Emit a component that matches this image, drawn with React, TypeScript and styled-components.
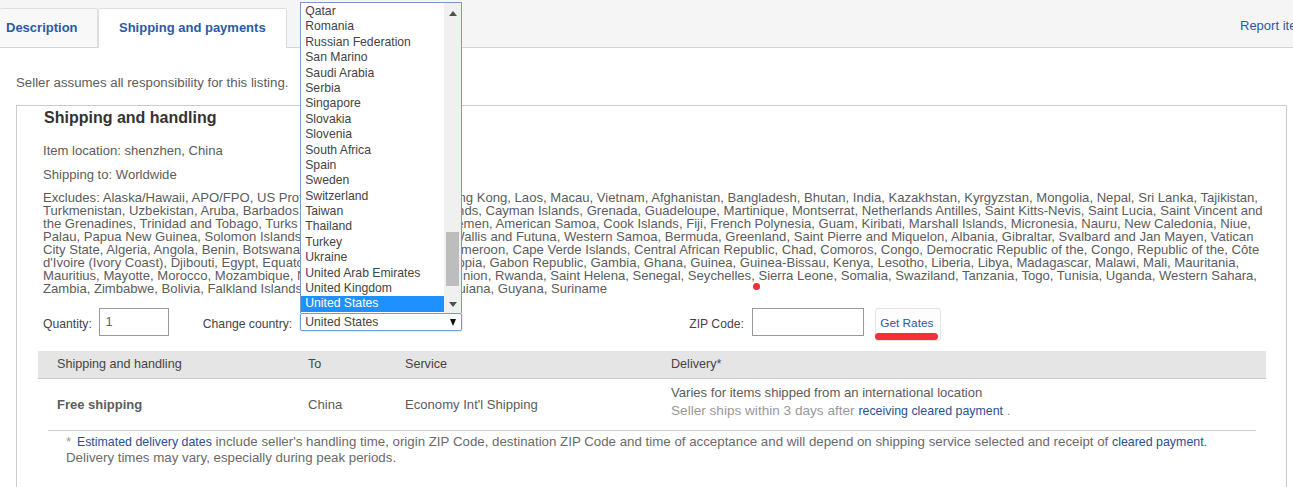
import styled, { createGlobalStyle } from "styled-components";

const GlobalStyle = createGlobalStyle`
  html, body {
    margin: 0;
    padding: 0;
    height: 487px;
    overflow: hidden;
    background: #fff;
  }
  body {
    font-family: "Liberation Sans", Arial, sans-serif;
    font-size: 13.1px;
    color: #5c5c5c;
  }
`;

const Page = styled.div`
  position: relative;
  width: 1293px;
  height: 487px;
  overflow: hidden;
`;

const TabBar = styled.div`
  display: flex;
  align-items: flex-end;
  height: 47px;
  background: #f5f5f5;
  border-bottom: 1px solid #d4d4d4;
`;

const Tab = styled.a<{ $active?: boolean }>`
  box-sizing: border-box;
  width: ${(p) => (p.$active ? "189px" : "98px")};
  height: ${(p) => (p.$active ? "40px" : "39px")};
  margin-bottom: ${(p) => (p.$active ? "-1px" : "0")};
  padding-left: ${(p) => (p.$active ? "20px" : "6px")};
  line-height: 38px;
  font-size: 13px;
  font-weight: bold;
  color: #2a5aa5;
  background: ${(p) => (p.$active ? "#fff" : "#f8f8f8")};
  border: 1px solid #dedede;
  border-left-width: ${(p) => (p.$active ? "1px" : "0")};
  border-bottom-width: 0;
  border-radius: 2px 2px 0 0;
`;

const ReportLink = styled.a`
  width: 53px;
  margin-left: auto;
  margin-top: 4px;
  align-self: center;
  overflow: hidden;
  white-space: nowrap;
  font-size: 13px;
  color: #2a5aa5;
`;

const Notice = styled.p`
  margin: 27px 0 14px 16px;
  line-height: 16px;
  font-size: 13.25px;
`;

const Panel = styled.section`
  box-sizing: border-box;
  width: 1271px;
  height: 420px;
  margin-left: 16px;
  border: 1px solid #ccc;
`;

const Heading = styled.h2`
  margin: 1px 0 0 27px;
  line-height: 22px;
  font-size: 16px;
  font-weight: bold;
  color: #333;
`;

const InfoLine = styled.p<{ $top: number }>`
  margin: ${(p) => p.$top}px 0 0 26px;
  line-height: 16px;
`;

const Excludes = styled.div`
  margin: 8px 0 0 26px;
  line-height: 13px;
`;

const ExcludeLine = styled.div`
  white-space: nowrap;
`;

const RedDot = styled.span`
  position: absolute;
  left: 753px;
  top: 283px;
  width: 7px;
  height: 7px;
  border-radius: 50%;
  background: #ee2f37;
`;

const FormRow = styled.div`
  display: flex;
  align-items: flex-start;
  height: 28px;
  margin: 13px 0 0 26px;
`;

const FieldLabel = styled.label<{ $left?: number; $right?: number }>`
  margin-left: ${(p) => p.$left ?? 0}px;
  margin-right: ${(p) => p.$right ?? 8}px;
  line-height: 32px;
  font-size: 12.2px;
  color: #444;
`;

const TextBox = styled.div<{ $width: number }>`
  box-sizing: border-box;
  width: ${(p) => p.$width}px;
  height: 28px;
  padding-left: 6px;
  line-height: 26px;
  border: 1px solid #999;
  font-size: 12px;
`;

const CountryField = styled.div`
  position: relative;
  width: 162px;
  height: 18px;
  margin-top: 5px;
`;

const CountrySelect = styled.div`
  box-sizing: border-box;
  display: flex;
  justify-content: space-between;
  align-items: center;
  height: 18px;
  padding: 0 5px 0 4px;
  background: #fff;
  border: 1px solid #6f9ee0;
  border-radius: 2px;
  box-shadow: 0 0 2px #9dbdea;
  font-size: 12.2px;
  color: #444;
`;

const SelectArrow = styled.span`
  width: 0;
  height: 0;
  border-left: 3.5px solid transparent;
  border-right: 3.5px solid transparent;
  border-top: 7px solid #111;
`;

const ScrollArrow = styled.span<{ $up?: boolean }>`
  width: 0;
  height: 0;
  border-left: 4px solid transparent;
  border-right: 4px solid transparent;
  ${(p) => (p.$up ? "border-bottom" : "border-top")}: 5px solid #505050;
`;

const CountryList = styled.div`
  position: absolute;
  left: 0;
  bottom: 18px;
  box-sizing: border-box;
  display: flex;
  width: 162px;
  height: 311px;
  background: #fff;
  border: 1px solid #7d9ac4;
  border-bottom: 0;
`;

const Options = styled.ul`
  flex: 1;
  margin: 0;
  padding: 1px 0 0;
  list-style: none;
`;

const Option = styled.li<{ $selected?: boolean }>`
  height: 15.4px;
  padding-left: 4px;
  line-height: 15.4px;
  font-size: 12.2px;
  color: ${(p) => (p.$selected ? "#fff" : "#444")};
  background: ${(p) => (p.$selected ? "#1e90ff" : "transparent")};
`;

const Scrollbar = styled.div`
  display: flex;
  flex-direction: column;
  align-items: center;
  width: 17px;
  padding: 8px 0 6px;
  background: #f0f0f0;
`;

const ScrollThumb = styled.div`
  width: 13px;
  height: 54px;
  margin-top: auto;
  margin-bottom: 16px;
  background: #bdbdbd;
`;

const RatesButton = styled.div`
  position: relative;
  box-sizing: border-box;
  width: 66px;
  height: 33px;
  margin-left: 11px;
  padding: 7px 2px 0 0;
  text-align: center;
  font-size: 11.8px;
  color: #2a5aa5;
  background: #fdfdfd;
  border: 1px solid #e4e4e4;
  border-radius: 3px;
`;

const RedUnderline = styled.span`
  position: absolute;
  left: -1px;
  top: 24px;
  width: 63px;
  height: 7px;
  border-radius: 4px;
  background: #f0303a;
`;

const ShippingTable = styled.div`
  width: 1228px;
  margin: 15px 0 0 21px;
`;

const TableRow = styled.div<{ $head?: boolean }>`
  box-sizing: border-box;
  display: grid;
  grid-template-columns: 251px 97px 266px 1fr;
  align-items: center;
  height: ${(p) => (p.$head ? "28px" : "51px")};
  padding-left: 19px;
  background: ${(p) => (p.$head ? "#e5e5e5" : "transparent")};
  border-bottom: ${(p) => (p.$head ? "1px solid #c8c8c8" : "0")};
  color: ${(p) => (p.$head ? "#444" : "#5c5c5c")};
  font-size: ${(p) => (p.$head ? "12.6px" : "13.1px")};
`;

const Cell = styled.div<{ $bold?: boolean }>`
  font-size: ${(p) => (p.$bold ? "13px" : "inherit")};
  font-weight: ${(p) => (p.$bold ? "bold" : "normal")};
  line-height: 17px;
`;

const DeliveryCell = styled.div`
  padding-bottom: 6px;
  line-height: 18px;
`;

const Muted = styled.span`
  color: #999;
`;

const SellerNote = styled(Muted)`
  font-size: 13.6px;
`;

const Link = styled.a`
  font-size: 12.4px;
  color: #2a4f92;
`;

const Asterisk = styled(Muted)`
  margin-right: 2px;
`;

const Footnote = styled.div`
  margin: 0 10px;
  padding: 3px 0 0 18px;
  line-height: 15px;
  font-size: 13.3px;
  color: #6a6a6a;
  border-top: 1px solid #ccc;
`;

const COUNTRIES = [
  "Qatar",
  "Romania",
  "Russian Federation",
  "San Marino",
  "Saudi Arabia",
  "Serbia",
  "Singapore",
  "Slovakia",
  "Slovenia",
  "South Africa",
  "Spain",
  "Sweden",
  "Switzerland",
  "Taiwan",
  "Thailand",
  "Turkey",
  "Ukraine",
  "United Arab Emirates",
  "United Kingdom",
  "United States",
];

const EXCLUDES = [
  "Excludes: Alaska/Hawaii, APO/FPO, US Protectorates, Cambodia,\u00a0\u00a0\u00a0 Hong Kong, Laos, Macau, Vietnam, Afghanistan, Bangladesh, Bhutan, India, Kazakhstan, Kyrgyzstan, Mongolia, Nepal, Sri Lanka, Tajikistan,",
  "Turkmenistan, Uzbekistan, Aruba, Barbados, Belize, British Virgin\u00a0\u00a0\u00a0 Islands, Cayman Islands, Grenada, Guadeloupe, Martinique, Montserrat, Netherlands Antilles, Saint Kitts-Nevis, Saint Lucia, Saint Vincent and",
  "the Grenadines, Trinidad and Tobago, Turks and Caicos Islands, Iraq, Yemen, American Samoa, Cook Islands, Fiji, French Polynesia, Guam, Kiribati, Marshall Islands, Micronesia, Nauru, New Caledonia, Niue,",
  "Palau, Papua New Guinea, Solomon Islands, Tonga, Tuvalu, Vanuatu, Wallis and Futuna, Western Samoa, Bermuda, Greenland, Saint Pierre and Miquelon, Albania, Gibraltar, Svalbard and Jan Mayen, Vatican",
  "City State, Algeria, Angola, Benin, Botswana, Burkina Faso, Burundi, Cameroon, Cape Verde Islands, Central African Republic, Chad, Comoros, Congo, Democratic Republic of the, Congo, Republic of the, Côte",
  "d'Ivoire (Ivory Coast), Djibouti, Egypt, Equatorial Guinea, Eritrea,\u00a0\u00a0\u00a0\u00a0 Ethiopia, Gabon Republic, Gambia, Ghana, Guinea, Guinea-Bissau, Kenya, Lesotho, Liberia, Libya, Madagascar, Malawi, Mali, Mauritania,",
  "Mauritius, Mayotte, Morocco, Mozambique, Namibia, Niger, Nigeria, Réunion, Rwanda, Saint Helena, Senegal, Seychelles, Sierra Leone, Somalia, Swaziland, Tanzania, Togo, Tunisia, Uganda, Western Sahara,",
  "Zambia, Zimbabwe, Bolivia, Falkland Islands (Islas Malvinas), French Guiana, Guyana, Suriname",
];

export default function App() {
  return (
    <Page>
      <GlobalStyle />
      <TabBar>
        <Tab>Description</Tab>
        <Tab $active>Shipping and payments</Tab>
        <ReportLink>Report item</ReportLink>
      </TabBar>
      <Notice>Seller assumes all responsibility for this listing.</Notice>
      <Panel>
        <Heading>Shipping and handling</Heading>
        <InfoLine $top={14}>Item location: shenzhen, China</InfoLine>
        <InfoLine $top={8}>Shipping to: Worldwide</InfoLine>
        <Excludes>
          {EXCLUDES.map((line) => (
            <ExcludeLine key={line}>{line}</ExcludeLine>
          ))}
        </Excludes>
        <RedDot />
        <FormRow>
          <FieldLabel $right={7}>Quantity:</FieldLabel>
          <TextBox $width={70}>1</TextBox>
          <FieldLabel $left={34} $right={8}>
            Change country:
          </FieldLabel>
          <CountryField>
            <CountryList>
              <Options>
                {COUNTRIES.map((name) => (
                  <Option key={name} $selected={name === "United States"}>
                    {name}
                  </Option>
                ))}
              </Options>
              <Scrollbar>
                <ScrollArrow $up />
                <ScrollThumb />
                <ScrollArrow />
              </Scrollbar>
            </CountryList>
            <CountrySelect>
              United States
              <SelectArrow />
            </CountrySelect>
          </CountryField>
          <FieldLabel $left={227}>ZIP Code:</FieldLabel>
          <TextBox $width={112} />
          <RatesButton>
            Get Rates
            <RedUnderline />
          </RatesButton>
        </FormRow>
        <ShippingTable>
          <TableRow $head>
            <Cell>Shipping and handling</Cell>
            <Cell>To</Cell>
            <Cell>Service</Cell>
            <Cell>
              Delivery<Link>*</Link>
            </Cell>
          </TableRow>
          <TableRow>
            <Cell $bold>Free shipping</Cell>
            <Cell>China</Cell>
            <Cell>Economy Int'l Shipping</Cell>
            <DeliveryCell>
              Varies for items shipped from an international location
              <br />
              <SellerNote>Seller ships within 3 days after </SellerNote>
              <Link>receiving cleared payment</Link>
              <Muted> .</Muted>
            </DeliveryCell>
          </TableRow>
          <Footnote>
            <Asterisk>* </Asterisk>
            <Link>Estimated delivery dates</Link> include seller's handling
            time, origin ZIP Code, destination ZIP Code and time of acceptance
            and will depend on shipping service selected and receipt of{" "}
            <Link>cleared payment</Link>.
            <br />
            Delivery times may vary, especially during peak periods.
          </Footnote>
        </ShippingTable>
      </Panel>
    </Page>
  );
}
